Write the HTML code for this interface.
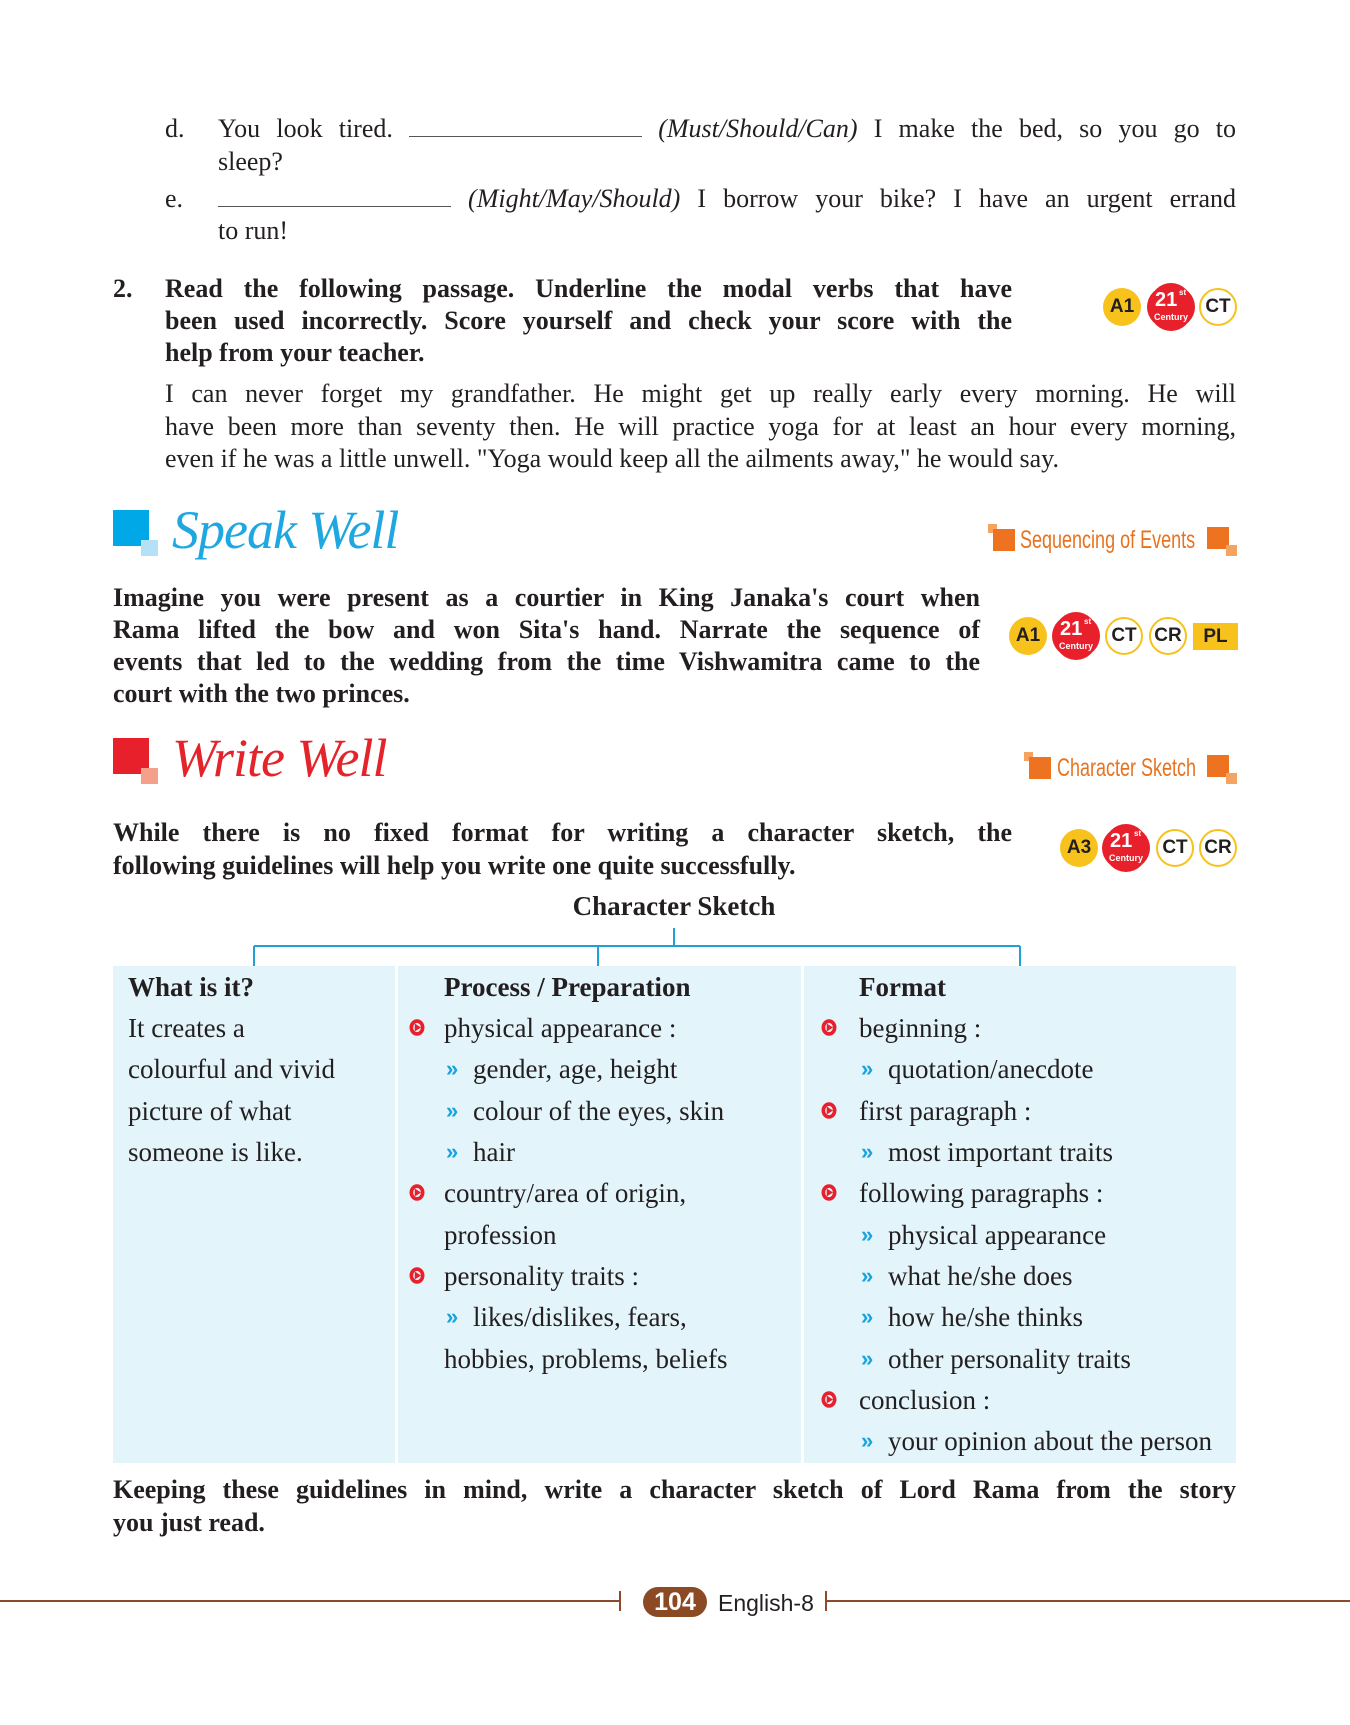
<!DOCTYPE html>
<html><head><meta charset="utf-8"><style>
*{margin:0;padding:0;box-sizing:border-box}
body{width:1350px;height:1725px;background:#fff;position:relative;overflow:hidden;font-family:"Liberation Serif",serif;color:#231f20}
.l{position:absolute;white-space:nowrap;font-size:26px;line-height:30px;text-align:justify;text-align-last:justify}
.s{text-align-last:left}
.b{font-weight:bold}
.u{display:inline-block;width:233px;border-bottom:1.5px solid #555;height:22px;vertical-align:baseline}
.c{position:absolute;width:38px;height:38px;border-radius:50%;font:bold 19px/38px "Liberation Sans",sans-serif;text-align:center;color:#231f20}
.y{background:#f7c21b}
.o{background:#fff;border:2.5px solid #f7c21b;line-height:33px}
.r{position:absolute;width:44px;height:44px;border-radius:50%;background:#e8202b;color:#fff;font-family:"Liberation Sans",sans-serif;box-shadow:0 -3px 0 -1px #e8202b,0 3px 0 -1px #e8202b,3px 0 0 -1px #e8202b,-3px 0 0 -1px #e8202b}
.r b{position:absolute;left:6px;top:5px;font-size:20px;line-height:20px}
.r sup{position:absolute;left:30px;top:3px;font-size:8px;font-weight:bold}
.r i{position:absolute;left:0;width:44px;text-align:center;top:27px;font-size:9px;font-style:normal;font-weight:bold}
.t{position:absolute;font-size:27px;line-height:30px;white-space:nowrap}
.bu{position:absolute;width:16px;height:17px}
.ch{position:absolute;color:#1aa3dd;font:bold 22px/30px "Liberation Sans",sans-serif}
.lab{position:absolute;font-family:"Liberation Sans Narrow","Liberation Sans",sans-serif;color:#e8731f;font-size:25px;line-height:30px;white-space:nowrap}
</style></head><body>

<div class="l s" style="left:165px;top:114px">d.</div>
<div class="l" style="left:218px;top:114px;width:1018px">You look tired. <span class="u"></span> <i>(Must/Should/Can)</i> I make the bed, so you go to</div>
<div class="l s" style="left:218px;top:147px">sleep?</div>
<div class="l s" style="left:165px;top:184px">e.</div>
<div class="l" style="left:218px;top:184px;width:1018px"><span class="u"></span> <i>(Might/May/Should)</i> I borrow your bike? I have an urgent errand</div>
<div class="l s" style="left:218px;top:216px">to run!</div>

<div class="l s b" style="left:113px;top:274px">2.</div>
<div class="l b" style="left:165px;top:274px;width:847px">Read the following passage. Underline the modal verbs that have</div>
<div class="l b" style="left:165px;top:306px;width:847px">been used incorrectly. Score yourself and check your score with the</div>
<div class="l s b" style="left:165px;top:338px">help from your teacher.</div>

<div class="c y" style="left:1103px;top:288px">A1</div>
<div class="r" style="left:1149px;top:285px"><b>21</b><sup>st</sup><i>Century</i></div>
<div class="c o" style="left:1199px;top:288px">CT</div>

<div class="l" style="left:165px;top:379px;width:1071px">I can never forget my grandfather. He might get up really early every morning. He will</div>
<div class="l" style="left:165px;top:412px;width:1071px">have been more than seventy then. He will practice yoga for at least an hour every morning,</div>
<div class="l s" style="left:165px;top:444px">even if he was a little unwell. "Yoga would keep all the ailments away," he would say.</div>

<div style="position:absolute;left:113px;top:510px;width:36px;height:36px;background:#00a8e8"></div>
<div style="position:absolute;left:141px;top:540px;width:17px;height:16px;background:#b5e1f6"></div>
<div style="position:absolute;left:172px;top:500px;font:italic 54px/60px 'Liberation Serif',serif;color:#1ea7e0;letter-spacing:-1px">Speak Well</div>
<div style="position:absolute;left:988px;top:524px;width:9px;height:9px;background:#f4a460"></div>
<div style="position:absolute;left:993px;top:529px;width:22px;height:22px;background:#ee7320"></div>
<div class="lab" style="left:1020px;top:525px;transform:scaleX(.72);transform-origin:left">Sequencing of Events</div>
<div style="position:absolute;left:1207px;top:527px;width:22px;height:22px;background:#ee7320"></div>
<div style="position:absolute;left:1226px;top:545px;width:11px;height:11px;background:#f4a460"></div>

<div class="l b" style="left:113px;top:583px;width:867px">Imagine you were present as a courtier in King Janaka's court when</div>
<div class="l b" style="left:113px;top:615px;width:867px">Rama lifted the bow and won Sita's hand. Narrate the sequence of</div>
<div class="l b" style="left:113px;top:647px;width:867px">events that led to the wedding from the time Vishwamitra came to the</div>
<div class="l s b" style="left:113px;top:679px">court with the two princes.</div>

<div class="c y" style="left:1009px;top:617px">A1</div>
<div class="r" style="left:1054px;top:614px"><b>21</b><sup>st</sup><i>Century</i></div>
<div class="c o" style="left:1105px;top:617px">CT</div>
<div class="c o" style="left:1149px;top:617px">CR</div>
<div style="position:absolute;left:1193px;top:623px;width:45px;height:27px;background:#f7c21b;font:bold 19px/27px 'Liberation Sans',sans-serif;text-align:center">PL</div>

<div style="position:absolute;left:113px;top:738px;width:36px;height:36px;background:#e8202b"></div>
<div style="position:absolute;left:141px;top:768px;width:17px;height:16px;background:#f4a08a"></div>
<div style="position:absolute;left:172px;top:728px;font:italic 54px/60px 'Liberation Serif',serif;color:#e4232b;letter-spacing:-1px">Write Well</div>
<div style="position:absolute;left:1024px;top:752px;width:9px;height:9px;background:#f4a460"></div>
<div style="position:absolute;left:1029px;top:757px;width:22px;height:22px;background:#ee7320"></div>
<div class="lab" style="left:1057px;top:753px;transform:scaleX(.72);transform-origin:left">Character Sketch</div>
<div style="position:absolute;left:1207px;top:755px;width:22px;height:22px;background:#ee7320"></div>
<div style="position:absolute;left:1226px;top:773px;width:11px;height:11px;background:#f4a460"></div>

<div class="l b" style="left:113px;top:818px;width:899px">While there is no fixed format for writing a character sketch, the</div>
<div class="l s b" style="left:113px;top:851px">following guidelines will help you write one quite successfully.</div>

<div class="c y" style="left:1060px;top:829px">A3</div>
<div class="r" style="left:1104px;top:826px"><b>21</b><sup>st</sup><i>Century</i></div>
<div class="c o" style="left:1156px;top:829px">CT</div>
<div class="c o" style="left:1199px;top:829px">CR</div>

<div style="position:absolute;left:0;width:1350px;top:891px;text-align:center;font:bold 27px/30px 'Liberation Serif',serif;padding-right:2px">Character Sketch</div>
<svg style="position:absolute;left:0;top:925px" width="1350" height="45"><path d="M674 3V21M254 21H1020M254 21V42M598 21V42M1020 21V42" stroke="#1ea0d8" stroke-width="2" fill="none"/></svg>

<div style="position:absolute;left:113px;top:966px;width:1123px;height:497px;background:#e3f4fb"></div>
<div style="position:absolute;left:395px;top:966px;width:3px;height:497px;background:#fff"></div>
<div style="position:absolute;left:801px;top:966px;width:3px;height:497px;background:#fff"></div>

<div class="t b" style="left:128px;top:972px">What is it?</div>
<div class="t" style="left:128px;top:1013px">It creates a</div>
<div class="t" style="left:128px;top:1054px">colourful and vivid</div>
<div class="t" style="left:128px;top:1096px">picture of what</div>
<div class="t" style="left:128px;top:1137px">someone is like.</div>

<div class="t b" style="left:444px;top:972px">Process / Preparation</div>
<div class="t" style="left:444px;top:1013px">physical appearance :</div>
<div class="t" style="left:473px;top:1054px">gender, age, height</div>
<div class="t" style="left:473px;top:1096px">colour of the eyes, skin</div>
<div class="t" style="left:473px;top:1137px">hair</div>
<div class="t" style="left:444px;top:1178px">country/area of origin,</div>
<div class="t" style="left:444px;top:1220px">profession</div>
<div class="t" style="left:444px;top:1261px">personality traits :</div>
<div class="t" style="left:473px;top:1302px">likes/dislikes, fears,</div>
<div class="t" style="left:444px;top:1344px">hobbies, problems, beliefs</div>

<div class="t b" style="left:859px;top:972px">Format</div>
<div class="t" style="left:859px;top:1013px">beginning :</div>
<div class="t" style="left:888px;top:1054px">quotation/anecdote</div>
<div class="t" style="left:859px;top:1096px">first paragraph :</div>
<div class="t" style="left:888px;top:1137px">most important traits</div>
<div class="t" style="left:859px;top:1178px">following paragraphs :</div>
<div class="t" style="left:888px;top:1220px">physical appearance</div>
<div class="t" style="left:888px;top:1261px">what he/she does</div>
<div class="t" style="left:888px;top:1302px">how he/she thinks</div>
<div class="t" style="left:888px;top:1344px">other personality traits</div>
<div class="t" style="left:859px;top:1385px">conclusion :</div>
<div class="t" style="left:888px;top:1426px">your opinion about the person</div>

<svg class="bu" style="left:409px;top:1019px" viewBox="0 0 14 15"><ellipse cx="7" cy="7.5" rx="5" ry="5.7" fill="none" stroke="#e8202b" stroke-width="3.2"/><path d="M5 4L10.5 7.5 5 11z" fill="#e8202b"/></svg>
<svg class="bu" style="left:409px;top:1184px" viewBox="0 0 14 15"><ellipse cx="7" cy="7.5" rx="5" ry="5.7" fill="none" stroke="#e8202b" stroke-width="3.2"/><path d="M5 4L10.5 7.5 5 11z" fill="#e8202b"/></svg>
<svg class="bu" style="left:409px;top:1267px" viewBox="0 0 14 15"><ellipse cx="7" cy="7.5" rx="5" ry="5.7" fill="none" stroke="#e8202b" stroke-width="3.2"/><path d="M5 4L10.5 7.5 5 11z" fill="#e8202b"/></svg>
<svg class="bu" style="left:821px;top:1019px" viewBox="0 0 14 15"><ellipse cx="7" cy="7.5" rx="5" ry="5.7" fill="none" stroke="#e8202b" stroke-width="3.2"/><path d="M5 4L10.5 7.5 5 11z" fill="#e8202b"/></svg>
<svg class="bu" style="left:821px;top:1102px" viewBox="0 0 14 15"><ellipse cx="7" cy="7.5" rx="5" ry="5.7" fill="none" stroke="#e8202b" stroke-width="3.2"/><path d="M5 4L10.5 7.5 5 11z" fill="#e8202b"/></svg>
<svg class="bu" style="left:821px;top:1184px" viewBox="0 0 14 15"><ellipse cx="7" cy="7.5" rx="5" ry="5.7" fill="none" stroke="#e8202b" stroke-width="3.2"/><path d="M5 4L10.5 7.5 5 11z" fill="#e8202b"/></svg>
<svg class="bu" style="left:821px;top:1391px" viewBox="0 0 14 15"><ellipse cx="7" cy="7.5" rx="5" ry="5.7" fill="none" stroke="#e8202b" stroke-width="3.2"/><path d="M5 4L10.5 7.5 5 11z" fill="#e8202b"/></svg>

<div class="ch" style="left:446px;top:1054px">»</div>
<div class="ch" style="left:446px;top:1096px">»</div>
<div class="ch" style="left:446px;top:1137px">»</div>
<div class="ch" style="left:446px;top:1302px">»</div>
<div class="ch" style="left:861px;top:1054px">»</div>
<div class="ch" style="left:861px;top:1137px">»</div>
<div class="ch" style="left:861px;top:1220px">»</div>
<div class="ch" style="left:861px;top:1261px">»</div>
<div class="ch" style="left:861px;top:1302px">»</div>
<div class="ch" style="left:861px;top:1344px">»</div>
<div class="ch" style="left:861px;top:1426px">»</div>

<div class="l b" style="left:113px;top:1475px;width:1123px">Keeping these guidelines in mind, write a character sketch of Lord Rama from the story</div>
<div class="l s b" style="left:113px;top:1508px">you just read.</div>

<div style="position:absolute;left:0;top:1600px;width:620px;height:2px;background:#8b4a2b"></div>
<div style="position:absolute;left:619px;top:1591px;width:2px;height:20px;background:#8b4a2b"></div>
<div style="position:absolute;left:825px;top:1600px;width:525px;height:2px;background:#8b4a2b"></div>
<div style="position:absolute;left:825px;top:1591px;width:2px;height:20px;background:#8b4a2b"></div>
<div style="position:absolute;left:643px;top:1587px;width:64px;height:30px;border-radius:15px;background:#8b4a23;color:#fff;font:bold 25px/30px 'Liberation Sans Narrow','Liberation Sans',sans-serif;text-align:center">104</div>
<div style="position:absolute;left:718px;top:1588px;font:23px/30px 'Liberation Sans Narrow','Liberation Sans',sans-serif;color:#231f20">English-8</div>
</body></html>
